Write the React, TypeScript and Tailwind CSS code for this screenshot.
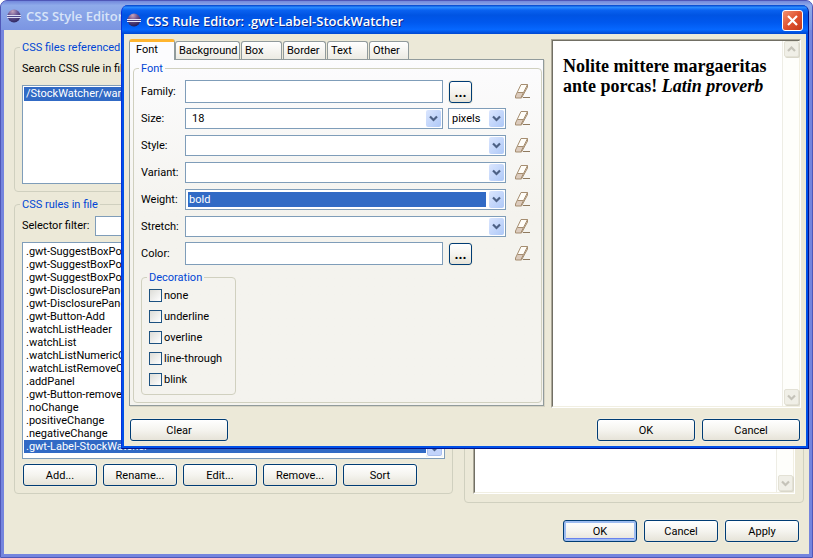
import React, { useId } from "react";

const cx = (...parts: (string | false | undefined)[]) => parts.filter(Boolean).join(" ");

function EclipseIcon({ faded }: { faded?: boolean }) {
  const id = useId();
  return (
    <svg width="16" height="16" viewBox="0 0 16 16" className={cx("shrink-0", faded && "opacity-90")} aria-hidden="true">
      <defs>
        <radialGradient id={id} cx="0.4" cy="0.15" r="0.9">
          <stop offset="0" stopColor="#c9a3b8" />
          <stop offset="0.4" stopColor="#6f5590" />
          <stop offset="1" stopColor="#1f1650" />
        </radialGradient>
      </defs>
      <circle cx="8" cy="8" r="6.5" fill={`url(#${id})`} />
      <path d="M1 7.5h14M1 9.5h14" stroke="#e8e6f6" strokeWidth="1" />
      <path d="M1.5 8.5h13" stroke="#4b3f86" strokeWidth="1" />
    </svg>
  );
}

function EraserIcon() {
  return (
    <svg width="16" height="15" viewBox="0 0 16 15" aria-hidden="true">
      <path d="M6 .5H12.5V3L6.5 14H.5V12Z" fill="#fffdf8" />
      <path d="M2.5 8.5H8.5L6.5 14H.5V12Z" fill="#dccbbd" />
      <path d="M8.5 8.5L12.5 1.5V3.5L7 13.5Z" fill="#e8dccb" />
      <path d="M6 .5H12.5V3L6.5 14H.5V12ZM2.5 8.5H8.5L12.5 .5M8.5 8.5L6 13.5" fill="none" stroke="#a58d70" strokeWidth="1" />
      <path d="M8 13.5H15" stroke="#8f7a5f" strokeWidth="1" />
    </svg>
  );
}

function Chevron({ className, up }: { className?: string; up?: boolean }) {
  return (
    <svg width="9" height="7" viewBox="0 0 9 7" className={className} aria-hidden="true">
      <path d={up ? "M1 5L4.5 1.5L8 5" : "M1 1.5L4.5 5L8 1.5"} fill="none" stroke="currentColor" strokeWidth="2.2" />
    </svg>
  );
}

function PushButton({ children, className, isDefault, label }: {
  children: React.ReactNode; className: string; isDefault?: boolean; label?: string;
}) {
  return (
    <button
      type="button"
      aria-label={label}
      className={cx(
        "flex h-[22px] items-center justify-center rounded-[3px] border border-[#003c74] bg-linear-to-b from-white via-[#f5f4ef] to-[#e6e3d8] leading-none",
        isDefault
          ? "shadow-[inset_0_0_0_2px_#9dbcf0,inset_0_-2px_0_1px_#6982ee]"
          : "shadow-[0_0_0_1px_#f1eee2]",
        className,
      )}
    >
      {children}
    </button>
  );
}

function BrowseButton({ label }: { label: string }) {
  return (
    <PushButton label={label} className="mr-[34px] ml-px w-[23px] text-[14px] font-bold">
      ...
    </PushButton>
  );
}

function Group({ title, className, children }: { title: string; className?: string; children?: React.ReactNode }) {
  return (
    <fieldset className={cx("min-w-0 rounded-[4px] border border-[#d0d0bf]", className)}>
      <legend className="-ml-0.5 px-0.5 leading-[13px] whitespace-nowrap text-[#0046d5]">{title}</legend>
      {children}
    </fieldset>
  );
}

function ScrollBar() {
  const button = "flex h-4 w-[15px] items-center justify-center rounded-[2px] border border-[#e3e1d5] bg-[#f0efe7] text-[#c5c3b9] shadow-[1px_1px_0_#d9d7ca]";
  return (
    <div className="flex w-[17px] shrink-0 flex-col items-center justify-between border-l border-[#eeede5] bg-[#fefefb] pb-px" aria-hidden="true">
      <span className={button}><Chevron up /></span>
      <span className={button}><Chevron /></span>
    </div>
  );
}

function BrowserPane({ className, children }: { className?: string; children?: React.ReactNode }) {
  return (
    <div className={cx("flex border border-t-[#aca899] border-r-white border-b-white border-l-[#aca899]", className)}>
      <div className="flex min-w-0 flex-1 border border-t-[#716f64] border-r-[#f1efe2] border-b-[#f1efe2] border-l-[#716f64] bg-white">
        <div className="min-w-0 flex-1">{children}</div>
        <ScrollBar />
      </div>
    </div>
  );
}

function ComboBox({ id, label, value, className, indent, highlighted }: {
  id: string; label?: string; value?: string; className: string; indent?: string; highlighted?: boolean;
}) {
  return (
    <div className={cx("flex h-[21px] items-center gap-[3px] border border-[#7f9db9] bg-white px-px", className)}>
      <select
        id={id}
        aria-label={label}
        defaultValue={value ?? ""}
        className={cx("ml-px h-[15px] min-w-0 flex-1 appearance-none leading-[15px] outline-none", indent ?? "pl-px", highlighted ? "bg-[#316ac5] text-white" : "bg-white")}
      >
        <option value={value ?? ""}>{value ?? ""}</option>
      </select>
      <span className="pointer-events-none flex h-[17px] w-[15px] shrink-0 items-center justify-center rounded-[2px] bg-linear-to-br from-[#dbe6fe] to-[#aec8f7] text-[#4d6185]">
        <Chevron />
      </span>
    </div>
  );
}

function TextBox({ id, className }: { id: string; className: string }) {
  return <input id={id} type="text" className={cx("min-w-0 border border-[#7f9db9] bg-white px-1 outline-none", className)} />;
}

function PropertyRow({ id, label, children }: { id: string; label: string; children: React.ReactNode }) {
  return (
    <div className="flex h-[27px] items-center">
      <label htmlFor={id} className="w-11 shrink-0">{label}</label>
      <div className="flex min-w-0 flex-1 items-center gap-[5px]">{children}</div>
      <button type="button" aria-label={`Clear ${label}`} className="ml-[9px] w-4 shrink-0">
        <EraserIcon />
      </button>
    </div>
  );
}

const rules = [
  ".gwt-SuggestBoxPopup",
  ".gwt-SuggestBoxPopup",
  ".gwt-SuggestBoxPopup",
  ".gwt-DisclosurePanel",
  ".gwt-DisclosurePanel",
  ".gwt-Button-Add",
  ".watchListHeader",
  ".watchList",
  ".watchListNumericColumn",
  ".watchListRemoveColumn",
  ".addPanel",
  ".gwt-Button-remove",
  ".noChange",
  ".positiveChange",
  ".negativeChange",
  ".gwt-Label-StockWatcher",
];

const tabs = [
  { name: "Background", width: "w-[65px]" },
  { name: "Box", width: "w-[41px]" },
  { name: "Border", width: "w-[43px]" },
  { name: "Text", width: "w-[41px]" },
  { name: "Other", width: "w-[40px]" },
];

const decorations = ["none", "underline", "overline", "line-through", "blink"];

function StyleEditorWindow() {
  return (
    <div className="flex min-h-screen flex-col overflow-hidden rounded-t-[7px] border border-[#4f57b8] bg-[#7585de]">
      <header className="flex h-[29px] items-center gap-1 bg-linear-to-b from-[#7288dc] via-[#8fabea] via-15% to-[#7b95e2] pt-px pl-[5px]">
        <EclipseIcon faded />
        <h1 className="font-['Open_Sans',sans-serif] text-[13px] font-semibold whitespace-nowrap text-[#d8e4f8]">CSS Style Editor</h1>
      </header>
      <main className="mx-[3px] mb-[3px] flex flex-1 flex-col bg-[#ece9d8] pt-[11px] pr-[5px] pb-3 pl-2.5">
        <div className="flex flex-1 gap-[11px]">
          <div className="flex w-[439px] shrink-0 flex-col self-start">
            <Group title="CSS files referenced" className="px-[7px] pb-[7px]">
              <p className="mt-2 leading-[14px] whitespace-nowrap">Search CSS rule in files:</p>
              <ul role="listbox" aria-label="CSS files" className="mt-[9px] h-[99px] border border-[#7f9db9] bg-white p-px">
                <li role="option" aria-selected="true" className="h-[14px] bg-[#316ac5] pl-0.5 leading-[14px] text-white">/StockWatcher/war/</li>
              </ul>
            </Group>
            <Group title="CSS rules in file" className="mt-1.5 px-[7px] pb-[7px]">
              <div className="mt-[5px] flex h-5 items-center">
                <label htmlFor="filter" className="w-[73px] shrink-0">Selector filter:</label>
                <TextBox id="filter" className="h-5 flex-1" />
              </div>
              <div className="mt-1.5 flex h-[217px] border border-[#7f9db9] bg-white p-px">
                <ul role="listbox" aria-label="CSS rules" className="flex-1 pt-px">
                  {rules.map((rule, index) => {
                    const selected = rule === ".gwt-Label-StockWatcher";
                    return (
                      <li key={index} role="option" aria-selected={selected} className={cx("h-[13px] pl-0.5 leading-[13px]", selected && "bg-[#316ac5] text-white")}>
                        {rule}
                      </li>
                    );
                  })}
                </ul>
                <span className="flex w-[17px] flex-col justify-end bg-[#f4f3ec]" aria-hidden="true">
                  <span className="flex h-[17px] items-center justify-center rounded-[3px] border border-white bg-[#c1d3fb] text-[#4d6185] shadow-[inset_0_0_0_1px_#a9bfee]">
                    <Chevron />
                  </span>
                </span>
              </div>
              <div className="mt-[5px] flex gap-1.5 pl-px">
                {["Add...", "Rename...", "Edit...", "Remove...", "Sort"].map((name) => (
                  <PushButton key={name} className="w-[74px]">{name}</PushButton>
                ))}
              </div>
            </Group>
          </div>
          <Group title="Preview" className="flex-1 px-2 pb-2">
            <BrowserPane className="h-full" />
          </Group>
        </div>
        <div className="mt-[17px] flex justify-end gap-[7px] pr-[5px]">
          <PushButton isDefault className="w-[74px]">OK</PushButton>
          <PushButton className="w-[74px]">Cancel</PushButton>
          <PushButton className="w-[74px]">Apply</PushButton>
        </div>
      </main>
    </div>
  );
}

function FontPanel() {
  return (
    <Group title="Font" className="px-[7px] pb-[7px]">
      <div className="mt-[3px] pr-[3px]">
        <PropertyRow id="family" label="Family:">
          <TextBox id="family" className="h-[23px] flex-1" />
          <BrowseButton label="Choose family" />
        </PropertyRow>
        <PropertyRow id="size" label="Size:">
          <ComboBox id="size" value="18" indent="pl-1" className="flex-1" />
          <ComboBox id="unit" label="Size unit" value="pixels" className="w-[58px]" />
        </PropertyRow>
        <PropertyRow id="style" label="Style:">
          <ComboBox id="style" className="flex-1" />
        </PropertyRow>
        <PropertyRow id="variant" label="Variant:">
          <ComboBox id="variant" className="flex-1" />
        </PropertyRow>
        <PropertyRow id="weight" label="Weight:">
          <ComboBox id="weight" value="bold" highlighted className="flex-1" />
        </PropertyRow>
        <PropertyRow id="stretch" label="Stretch:">
          <ComboBox id="stretch" className="flex-1" />
        </PropertyRow>
        <PropertyRow id="color" label="Color:">
          <TextBox id="color" className="h-[23px] flex-1" />
          <BrowseButton label="Choose color" />
        </PropertyRow>
      </div>
      <Group title="Decoration" className="mt-1 w-[95px] px-[7px] pb-2">
        <div className="mt-[5px] flex flex-col gap-2">
          {decorations.map((name) => (
            <label key={name} className="flex h-[13px] items-center gap-0.5 whitespace-nowrap">
              <input
                type="checkbox"
                className="size-[13px] shrink-0 appearance-none border border-[#1c5180] bg-linear-to-br from-[#dcdcd7] to-white checked:bg-[#21a121]"
              />
              {name}
            </label>
          ))}
        </div>
      </Group>
    </Group>
  );
}

function RuleEditorDialog() {
  return (
    <div
      role="dialog"
      aria-label="CSS Rule Editor"
      className="absolute top-[5px] right-1 left-[121px] overflow-hidden rounded-t-[7px] border-r border-b border-l border-[#00138c] border-l-[#0831d9] bg-[#0050e8]"
    >
      <header className="flex h-[29px] items-center gap-1 bg-linear-[180deg,#0040c8_0%,#2b8cff_8%,#0a62f0_18%,#0054e3_35%,#0058ee_60%,#0668ff_85%,#0047d0_100%] pr-[5px] pl-1">
        <EclipseIcon />
        <h2 className="flex-1 pt-0.5 font-['Open_Sans',sans-serif] text-[13px] font-semibold whitespace-nowrap text-white [text-shadow:1px_1px_0_#0a2a90]">
          CSS Rule Editor: .gwt-Label-StockWatcher
        </h2>
        <button type="button" aria-label="Close" className="mt-0.5 flex size-[21px] items-center justify-center rounded-[3px] border border-white bg-linear-to-br from-[#f0906f] via-[#e0522f] to-[#c4381a]">
          <svg width="13" height="13" viewBox="0 0 13 13" aria-hidden="true">
            <path d="M2 2L11 11M11 2L2 11" stroke="white" strokeWidth="2.2" />
          </svg>
        </button>
      </header>
      <div className="mx-0.5 mb-0.5 bg-[#ece9d8] px-[5px] pt-[5px] pb-[5px]">
        <div className="flex gap-[7px]">
          <div className="w-[415px] shrink-0 pb-0.5">
            <div role="tablist" className="flex h-5 items-end">
              <button role="tab" aria-selected="true" type="button" className="z-1 -mb-px h-[21px] w-[46px] rounded-t-[3px] border-x border-t-3 border-x-[#919b9c] border-t-[#ffb52f] bg-[#fcfcfe] pb-0.5 pl-[6px] text-left leading-[14px]">
                Font
              </button>
              {tabs.map(({ name, width }) => (
                <button
                  key={name}
                  role="tab"
                  aria-selected="false"
                  type="button"
                  className={cx("mr-px h-[18px] rounded-t-[3px] border border-b-0 border-[#919b9c] bg-linear-to-b from-white to-[#ecebe3] pt-px pl-[3px] text-left leading-4", width)}
                >
                  {name}
                </button>
              ))}
            </div>
            <div role="tabpanel" className="border border-[#919b9c] bg-linear-to-b from-[#fcfcfe] to-[#f4f3ee] to-45% pt-[2px] pr-px pb-0.5 pl-[3px] shadow-[1px_1px_0_#d6d3c3]">
              <FontPanel />
            </div>
          </div>
          <BrowserPane className="flex-1">
            <p className="pt-[15px] pl-2.5 font-['Liberation_Serif',serif] text-[18px] leading-5 font-bold text-black">
              Nolite mittere margaeritas ante porcas! <em>Latin proverb</em>
            </p>
          </BrowserPane>
        </div>
        <div className="mt-[11px] flex gap-[7px] px-px">
          <PushButton className="mr-auto w-[98px]">Clear</PushButton>
          <PushButton className="w-[98px]">OK</PushButton>
          <PushButton className="w-[98px]">Cancel</PushButton>
        </div>
      </div>
    </div>
  );
}

export default function App() {
  return (
    <div className="relative bg-white font-['Roboto',sans-serif] text-[11px] leading-[14px] text-black">
      <StyleEditorWindow />
      <RuleEditorDialog />
    </div>
  );
}
